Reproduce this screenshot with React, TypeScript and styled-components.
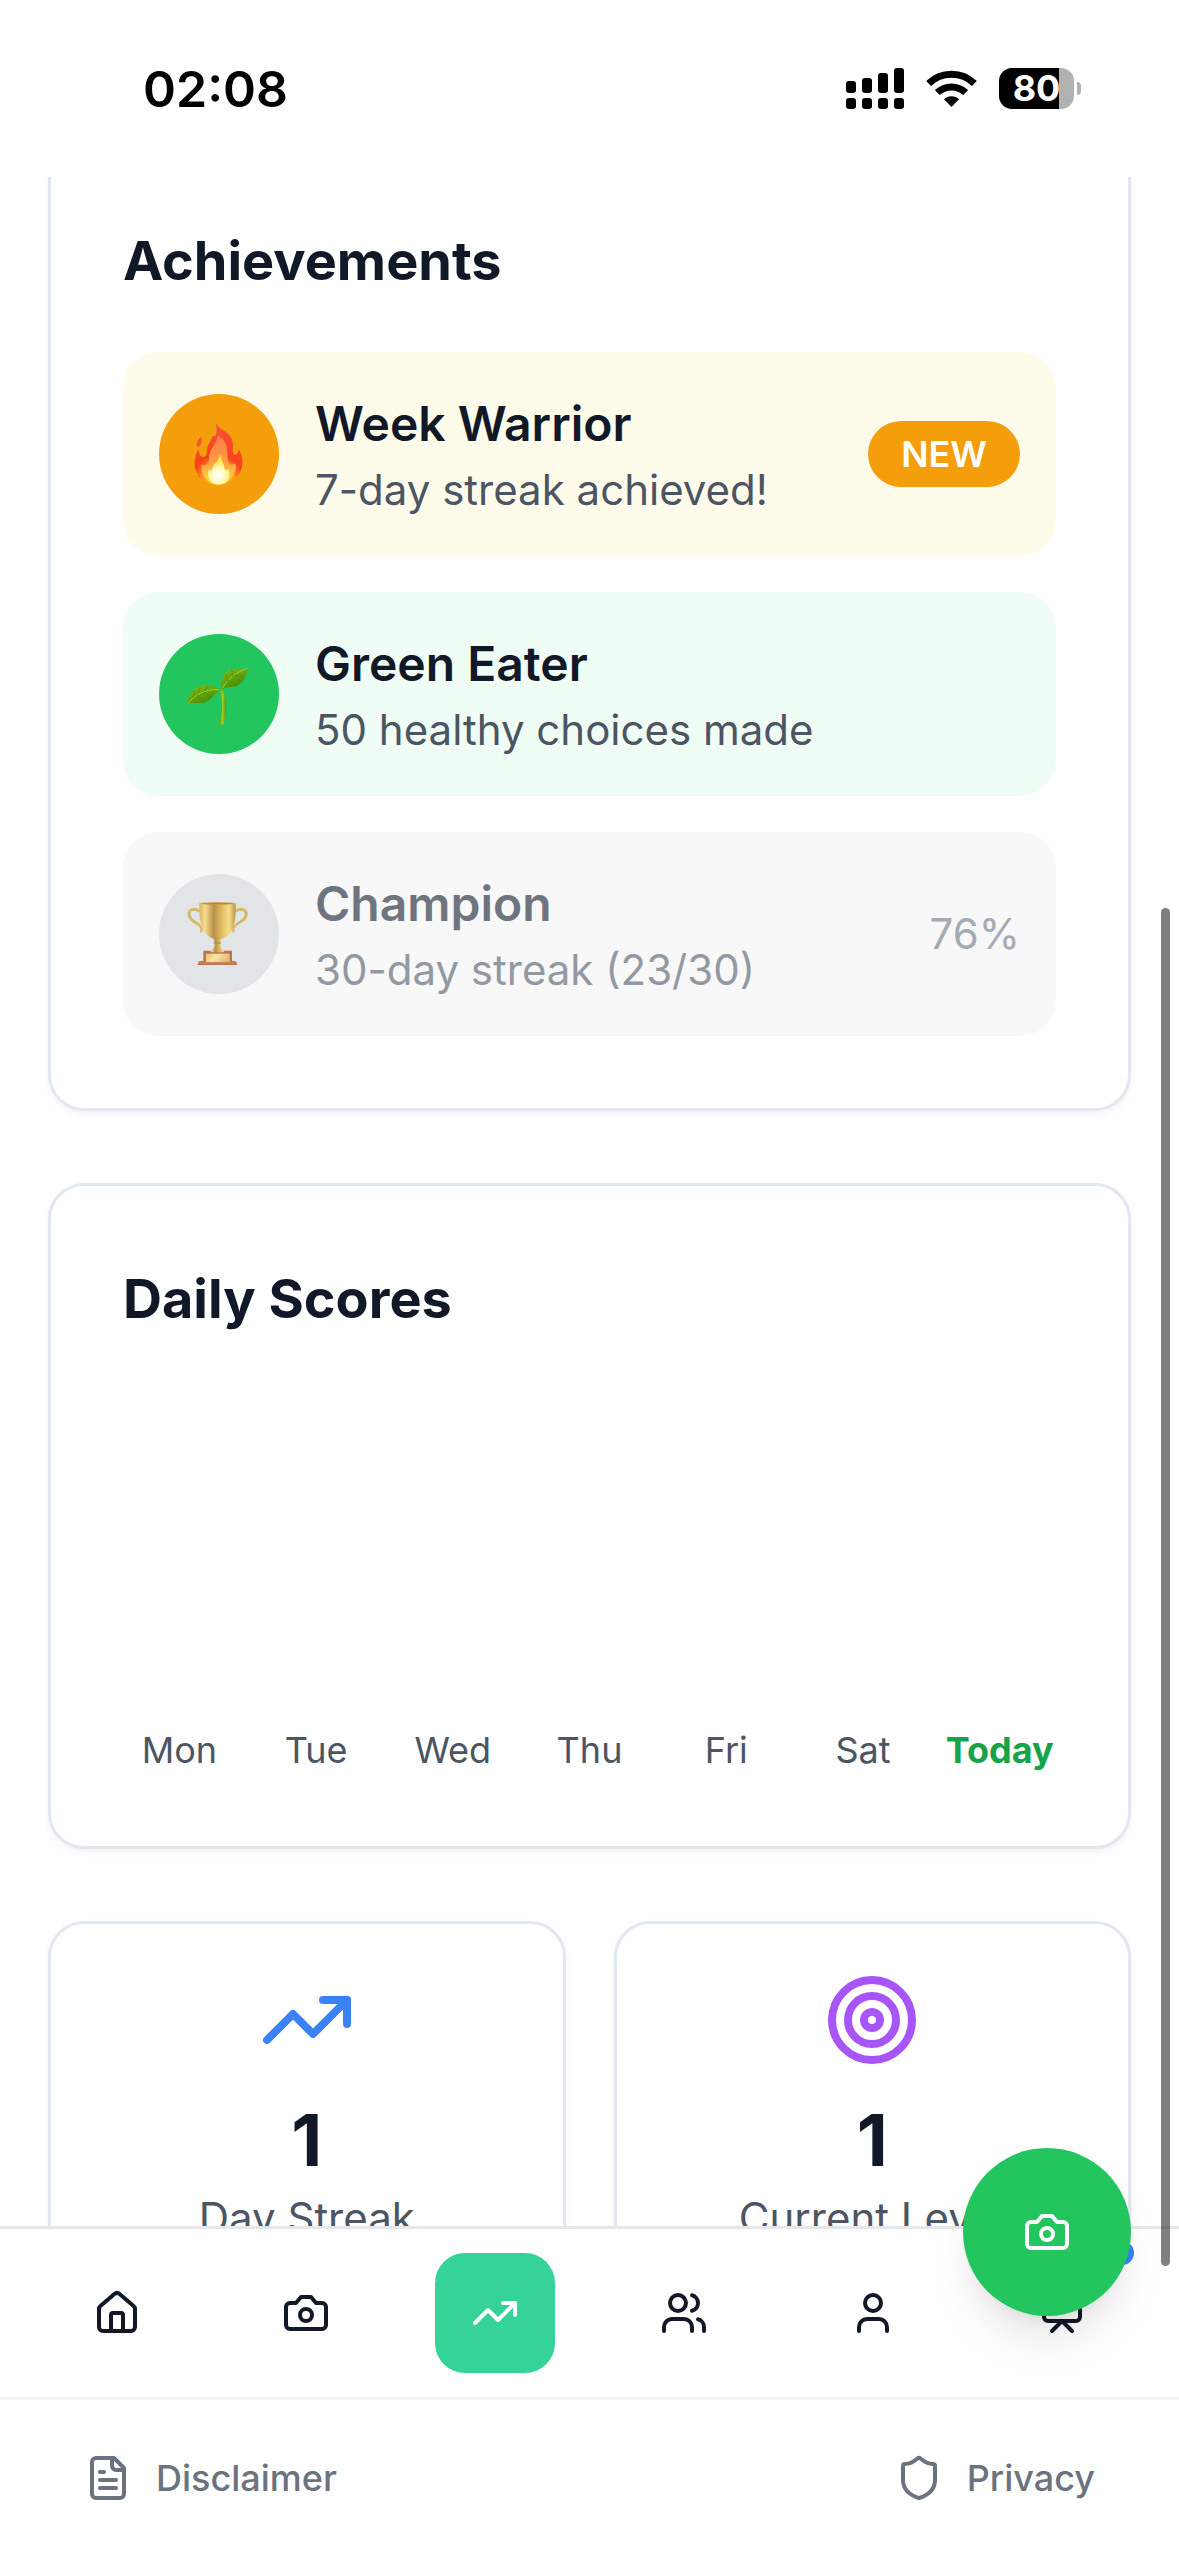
import React from "react";
import styled, { createGlobalStyle } from "styled-components";
import { House, Presentation, Shield, Target, TrendingUp } from "lucide-react";

const GlobalStyle = createGlobalStyle`
  *, *::before, *::after { box-sizing: border-box; }
  body {
    margin: 0;
    background: #ffffff;
    color: #111827;
    font-family: Inter, "Liberation Sans", sans-serif;
  }
  h2, h3, p, ul { margin: 0; padding: 0; }
  ul { list-style: none; }
  button { font: inherit; border: 0; cursor: pointer; }
`;

const Screen = styled.div`
  position: relative;
  display: flex;
  flex-direction: column;
  height: 100vh;
  overflow: hidden;
`;

/* ---------- status bar ---------- */

const StatusBar = styled.header`
  display: flex;
  flex: none;
  align-items: center;
  justify-content: space-between;
  height: 177px;
  padding: 0 98px 0 143px;
`;

const Clock = styled.time`
  color: #000000;
  font-size: 50px;
  font-weight: 600;
  line-height: 60px;
`;

const StatusIcons = styled.div`
  display: flex;
  align-items: center;
  gap: 22px;
`;

const Battery = styled.div`
  display: flex;
  align-items: center;
  gap: 3px;
`;

const BatteryBody = styled.div`
  display: flex;
  align-items: center;
  justify-content: center;
  width: 75px;
  height: 41px;
  border-radius: 13px;
  background: linear-gradient(to right, #000000 80%, #b1b1b1 80%);
  color: #ffffff;
  font-size: 36px;
  font-weight: 700;
  line-height: 41px;
`;

const BatteryTip = styled.div`
  width: 4px;
  height: 13px;
  border-radius: 0 4px 4px 0;
  background: #b1b1b1;
`;

/* ---------- content ---------- */

const Content = styled.main`
  display: flex;
  flex: 1;
  flex-direction: column;
  gap: 72px;
  min-height: 0;
  padding: 0 48px;
  overflow: hidden;
`;

const Card = styled.section<{ $continued?: boolean }>`
  flex: none;
  padding: ${(p) => (p.$continued ? "43px 72px 72px" : "72px")};
  border: 3px solid #e2e8f0;
  border-top-width: ${(p) => (p.$continued ? "0" : "3px")};
  border-radius: ${(p) => (p.$continued ? "0 0 36px 36px" : "36px")};
  background: #ffffff;
  box-shadow: 0 3px 6px rgba(0, 0, 0, 0.05);
`;

const CardTitle = styled.h2`
  margin-bottom: 51px;
  font-size: 54px;
  font-weight: 700;
  line-height: 81px;
`;

const AchievementList = styled.ul`
  display: flex;
  flex-direction: column;
  gap: 36px;
`;

const AchievementRow = styled.li<{ $background: string }>`
  display: flex;
  align-items: center;
  gap: 36px;
  padding: 36px;
  border-radius: 36px;
  background: ${(p) => p.$background};
`;

const Medal = styled.div<{ $color: string }>`
  flex: none;
  width: 120px;
  height: 120px;
  border-radius: 50%;
  background: ${(p) => p.$color};
`;

const AchievementText = styled.div`
  flex: 1;
  min-width: 0;
`;

const AchievementName = styled.h3<{ $muted?: boolean }>`
  color: ${(p) => (p.$muted ? "#6f757f" : "#111827")};
  font-size: 48px;
  font-weight: 600;
  line-height: 72px;
`;

const AchievementNote = styled.p<{ $muted?: boolean }>`
  color: ${(p) => (p.$muted ? "#9399a2" : "#4b5563")};
  font-size: 42px;
  line-height: 60px;
`;

const NewBadge = styled.span`
  padding: 9px 33px;
  border-radius: 33px;
  background: #f59e0b;
  color: #ffffff;
  font-size: 36px;
  font-weight: 600;
  line-height: 48px;
`;

const Progress = styled.span`
  color: #a5abb4;
  font-size: 42px;
  line-height: 60px;
`;

const Chart = styled.div`
  display: flex;
  align-items: flex-end;
  gap: 24px;
  height: 384px;
`;

const Day = styled.div<{ $today?: boolean }>`
  display: flex;
  flex: 1 1 0;
  justify-content: center;
  min-width: 0;
  color: ${(p) => (p.$today ? "#16a34a" : "#4b5563")};
  font-size: 36px;
  font-weight: ${(p) => (p.$today ? 700 : 400)};
  line-height: 48px;
`;

const StatGrid = styled.div`
  display: grid;
  flex: none;
  grid-template-columns: 1fr 1fr;
  gap: 48px;
`;

const StatCard = styled(Card)`
  display: flex;
  flex-direction: column;
  align-items: center;
  padding: 48px;
`;

const StatValue = styled.p`
  margin-top: 24px;
  font-size: 72px;
  font-weight: 700;
  line-height: 96px;
`;

const StatLabel = styled.p`
  color: #4b5563;
  font-size: 42px;
  line-height: 60px;
`;

/* ---------- bottom bars ---------- */

const Nav = styled.nav`
  display: flex;
  flex: none;
  justify-content: space-between;
  padding: 24px 57px;
  border-top: 3px solid #e5e7eb;
  background: #ffffff;
`;

const NavButton = styled.button<{ $active?: boolean }>`
  position: relative;
  display: flex;
  align-items: center;
  justify-content: center;
  width: 120px;
  height: 120px;
  padding: 0;
  border-radius: 30px;
  background: ${(p) => (p.$active ? "#36d399" : "transparent")};
  color: ${(p) => (p.$active ? "#ffffff" : "#111827")};
`;

const NotificationDot = styled.span`
  position: absolute;
  top: -12px;
  right: -12px;
  width: 24px;
  height: 24px;
  border-radius: 50%;
  background: #3b82f6;
`;

const Footer = styled.footer`
  display: flex;
  flex: none;
  align-items: center;
  justify-content: space-between;
  height: 159px;
  padding: 0 84px;
  border-top: 3px solid #f3f4f6;
  background: #ffffff;
`;

const FooterLink = styled.a`
  display: flex;
  align-items: center;
  gap: 24px;
  color: #6b7280;
  font-size: 36px;
  font-weight: 500;
  line-height: 48px;
  text-decoration: none;
`;

const CameraButton = styled.button`
  position: absolute;
  right: 48px;
  bottom: 240px;
  display: flex;
  align-items: center;
  justify-content: center;
  width: 168px;
  height: 168px;
  padding: 0;
  border-radius: 50%;
  background: #22c55e;
  color: #ffffff;
  box-shadow: 0 30px 45px -9px rgba(0, 0, 0, 0.1), 0 12px 18px -12px rgba(0, 0, 0, 0.1);
`;

const ScrollThumb = styled.div`
  position: absolute;
  top: 908px;
  right: 9px;
  bottom: 290px;
  width: 9px;
  border-radius: 5px;
  background: rgba(0, 0, 0, 0.5);
`;

/* ---------- drawings ---------- */

const LineIcon = ({ children }: { children: React.ReactNode }) => (
  <svg
    width="48"
    height="48"
    viewBox="0 0 24 24"
    fill="none"
    stroke="currentColor"
    strokeWidth="2"
    strokeLinecap="round"
    strokeLinejoin="round"
    aria-hidden="true"
  >
    {children}
  </svg>
);

const CameraIcon = () => (
  <LineIcon>
    <path d="M14.5 4h-5L7 7H4a2 2 0 0 0-2 2v9a2 2 0 0 0 2 2h16a2 2 0 0 0 2-2V9a2 2 0 0 0-2-2h-3l-2.5-3z" />
    <circle cx="12" cy="13" r="3" />
  </LineIcon>
);

const UsersIcon = () => (
  <LineIcon>
    <path d="M16 21v-2a4 4 0 0 0-4-4H6a4 4 0 0 0-4 4v2" />
    <circle cx="9" cy="7" r="4" />
    <path d="M22 21v-2a4 4 0 0 0-3-3.87" />
    <path d="M16 3.13a4 4 0 0 1 0 7.75" />
  </LineIcon>
);

const UserIcon = () => (
  <LineIcon>
    <path d="M19 21v-2a4 4 0 0 0-4-4H9a4 4 0 0 0-4 4v2" />
    <circle cx="12" cy="7" r="4" />
  </LineIcon>
);

const FileIcon = () => (
  <LineIcon>
    <path d="M15 2H6a2 2 0 0 0-2 2v16a2 2 0 0 0 2 2h12a2 2 0 0 0 2-2V7Z" />
    <path d="M14 2v4a2 2 0 0 0 2 2h4" />
    <path d="M10 9H8" />
    <path d="M16 13H8" />
    <path d="M16 17H8" />
  </LineIcon>
);

const SignalIcon = () => (
  <svg width="58" height="41" viewBox="0 0 58 41" aria-hidden="true">
    <rect x="0" y="13" width="10" height="12" rx="3" />
    <rect x="16" y="10" width="10" height="15" rx="3" />
    <rect x="32" y="5" width="10" height="20" rx="3" />
    <rect x="48" y="0" width="10" height="25" rx="3" />
    {[0, 16, 32, 48].map((x) => (
      <rect key={x} x={x} y="30" width="10" height="11" rx="3" />
    ))}
  </svg>
);

const WifiIcon = () => (
  <svg width="51" height="37" viewBox="0 0 51 37" fill="none" stroke="#000000" aria-hidden="true">
    <path d="M2.6 13.6a33 33 0 0 1 45.8 0" strokeWidth="7" />
    <path d="M11.3 22.6a20.5 20.5 0 0 1 28.4 0" strokeWidth="7" />
    <path d="M25.5 37 18 29.3a10.5 10.5 0 0 1 15 0Z" fill="#000000" stroke="none" />
  </svg>
);

const Flame = () => (
  <svg width="120" height="120" viewBox="0 0 360 360" aria-hidden="true">
    <defs>
      <radialGradient id="flameOuter" gradientUnits="userSpaceOnUse" cx="178" cy="255" r="165">
        <stop offset="0" stopColor="#ffd83a" />
        <stop offset="0.28" stopColor="#ff9a22" />
        <stop offset="0.44" stopColor="#f8421a" />
        <stop offset="1" stopColor="#f4553a" />
      </radialGradient>
      <linearGradient id="flameMid" x1="0" y1="0" x2="0" y2="1">
        <stop offset="0" stopColor="#ff7a4a" />
        <stop offset="0.5" stopColor="#ff9a42" />
        <stop offset="1" stopColor="#ffdf3e" />
      </linearGradient>
      <radialGradient id="flameCore" gradientUnits="userSpaceOnUse" cx="178" cy="244" r="46">
        <stop offset="0" stopColor="#ffffff" />
        <stop offset="0.45" stopColor="#fffbc0" />
        <stop offset="1" stopColor="#ffe33f" />
      </radialGradient>
    </defs>
    <path
      d="M170 86c8 22 51 26 52 66 0 15-3 30 6 30 7 0 10-5 10-17 14 17 16 44 7 65-4 9-8 14-15 18l4 1c-9 7-18 8-27 14-10 7-20 9-32 9-17 0-29-6-42-15-7-5-12-6-18-12l5-1c-15-16-20-50-1-78 1 13 5 23 13 23 8 1 11-7 12-18 1-24 13-27 16-44l9-2c5-8 5-22 1-39Z"
      fill="url(#flameOuter)"
    />
    <path
      d="M177 124c-6 28-28 44-27 70 0 18-15 24-22 18-3 23 8 39 25 52 14 10 39 9 52-1 18-14 29-33 24-56-6 6-15 7-20-1-9-18 8-56-32-82Z"
      fill="url(#flameMid)"
    />
    <path
      d="M183 179c-2 24-18 25-22 42-3 10-9 9-11 4-7 18 1 37 13 43 9 5 23 5 33 0 14-8 20-25 12-44-4 6-11 4-12-3-2-15-6-17-13-42Z"
      fill="url(#flameCore)"
    />
    <path d="M127 129c-8 5-14 15-14 26l5 5c7-8 13-17 9-31Z" fill="#f4542b" />
  </svg>
);

const Seedling = () => (
  <svg width="120" height="120" viewBox="0 0 360 360" aria-hidden="true">
    <defs>
      <linearGradient id="leaf" x1="0" y1="0" x2="0.6" y2="1">
        <stop offset="0" stopColor="#87bd18" />
        <stop offset="0.5" stopColor="#65a60d" />
        <stop offset="1" stopColor="#3f8608" />
      </linearGradient>
      <linearGradient id="stem" x1="0" y1="0" x2="1" y2="0">
        <stop offset="0" stopColor="#5b9a0a" />
        <stop offset="0.5" stopColor="#a4cf1c" />
        <stop offset="1" stopColor="#548f0c" />
      </linearGradient>
    </defs>
    <path d="M180 166c14 30 12 67 1 104 4 4 9 4 13 1 10-37 12-76-6-106Z" fill="url(#stem)" />
    <path d="M84 214c2-31 20-58 51-60 18-1 39 4 50 14-17 6-25 29-45 36-23 8-45-4-56 10Z" fill="url(#leaf)" />
    <path d="M187 166c-4-30 9-54 33-60 18-4 33 0 48-3-7 20-12 42-33 52-17 7-34 1-48 11Z" fill="url(#leaf)" />
    <g fill="none" strokeLinecap="round">
      <path d="M87 210c16-26 48-45 92-43M190 162c17-27 40-48 74-58" stroke="#9fcd3c" strokeWidth="3" />
      <path
        d="M104 188l2-16M119 177l3-16M139 170l5-13M113 183l20 15M133 173l22 14M205 142l-2-19M220 127l-1-18M208 139l22 12M224 123l26 6"
        stroke="#468b0b"
        strokeWidth="2"
      />
    </g>
  </svg>
);

const Trophy = () => (
  <svg width="120" height="120" viewBox="0 0 360 360" aria-hidden="true">
    <defs>
      <linearGradient id="cup" x1="0" y1="0" x2="1" y2="0">
        <stop offset="0" stopColor="#dcb559" />
        <stop offset="0.16" stopColor="#f5dc8c" />
        <stop offset="0.4" stopColor="#b7924b" />
        <stop offset="0.62" stopColor="#e3bd61" />
        <stop offset="0.82" stopColor="#f7dd88" />
        <stop offset="1" stopColor="#bb944a" />
      </linearGradient>
      <linearGradient id="plate" x1="0" y1="0" x2="1" y2="0.3">
        <stop offset="0" stopColor="#e9bf72" />
        <stop offset="0.5" stopColor="#f8e5a6" />
        <stop offset="1" stopColor="#e6bb70" />
      </linearGradient>
    </defs>
    <g fill="none" stroke="#dfba63" strokeWidth="7" strokeLinecap="round">
      <path d="M119 110c-10-10-30-5-30 10 0 17 16 23 29 32 11 7 12 13 8 20" />
      <path d="M231 110c10-10 32-5 32 10 0 17-17 23-31 32-11 7-12 13-8 20" />
    </g>
    <g fill="none" stroke="#b99350" strokeWidth="2">
      <path d="M117 113c-10-8-25-4-24 8 0 13 14 20 26 28" />
      <path d="M233 113c10-8 27-4 26 8 0 13-15 20-28 28" />
    </g>
    <path d="M121 88h109c1 44-2 88-34 104-12 5-27 5-39 0-33-15-37-60-36-104Z" fill="url(#cup)" />
    <ellipse cx="175" cy="88" rx="55" ry="4" fill="#d3aa56" />
    <ellipse cx="175" cy="89" rx="47" ry="2" fill="#a98343" />
    <path d="M163 194h24c-1 6-5 9-4 15 1 9 4 12 8 18 9 1 14 5 14 12h-59c0-7 5-11 14-12 4-6 7-9 7-18 0-6-3-9-4-15Z" fill="url(#cup)" />
    <path d="M163 207h23" stroke="#a98449" strokeWidth="3" />
    <path d="M133 230h20l5 5h34l5-5h22v31h8c4 0 7 5 7 12H116c0-7 4-12 8-12h9Z" fill="#bb744f" />
    <rect x="141" y="239" width="71" height="25" fill="url(#plate)" />
    <path d="M117 267h117" stroke="#d18e68" strokeWidth="3" />
  </svg>
);

const days = ["Mon", "Tue", "Wed", "Thu", "Fri", "Sat", "Today"];

const navItems = [
  { label: "Home", icon: <House size={48} /> },
  { label: "Camera", icon: <CameraIcon /> },
  { label: "Trends", icon: <TrendingUp size={48} />, active: true },
  { label: "Community", icon: <UsersIcon /> },
  { label: "Profile", icon: <UserIcon /> },
  { label: "Presentation", icon: <Presentation size={48} />, dot: true },
];

export default function App() {
  return (
    <>
      <GlobalStyle />
      <Screen>
        <StatusBar>
          <Clock>02:08</Clock>
          <StatusIcons>
            <SignalIcon />
            <WifiIcon />
            <Battery>
              <BatteryBody>80</BatteryBody>
              <BatteryTip />
            </Battery>
          </StatusIcons>
        </StatusBar>

        <Content>
          <Card $continued>
            <CardTitle>Achievements</CardTitle>
            <AchievementList>
              <AchievementRow $background="#fffbeb">
                <Medal $color="#f59e0b">
                  <Flame />
                </Medal>
                <AchievementText>
                  <AchievementName>Week Warrior</AchievementName>
                  <AchievementNote>7-day streak achieved!</AchievementNote>
                </AchievementText>
                <NewBadge>NEW</NewBadge>
              </AchievementRow>
              <AchievementRow $background="#f0fdf4">
                <Medal $color="#22c55e">
                  <Seedling />
                </Medal>
                <AchievementText>
                  <AchievementName>Green Eater</AchievementName>
                  <AchievementNote>50 healthy choices made</AchievementNote>
                </AchievementText>
              </AchievementRow>
              <AchievementRow $background="#f8f8f8">
                <Medal $color="#e1e5e8">
                  <Trophy />
                </Medal>
                <AchievementText>
                  <AchievementName $muted>Champion</AchievementName>
                  <AchievementNote $muted>30-day streak (23/30)</AchievementNote>
                </AchievementText>
                <Progress>76%</Progress>
              </AchievementRow>
            </AchievementList>
          </Card>

          <Card>
            <CardTitle>Daily Scores</CardTitle>
            <Chart>
              {days.map((day) => (
                <Day key={day} $today={day === "Today"}>
                  {day}
                </Day>
              ))}
            </Chart>
          </Card>

          <StatGrid>
            <StatCard>
              <TrendingUp size={96} color="#3b82f6" />
              <StatValue>1</StatValue>
              <StatLabel>Day Streak</StatLabel>
            </StatCard>
            <StatCard>
              <Target size={96} color="#a855f7" />
              <StatValue>1</StatValue>
              <StatLabel>Current Level</StatLabel>
            </StatCard>
          </StatGrid>
        </Content>

        <Nav>
          {navItems.map((item) => (
            <NavButton key={item.label} type="button" aria-label={item.label} $active={item.active}>
              {item.icon}
              {item.dot && <NotificationDot />}
            </NavButton>
          ))}
        </Nav>

        <Footer>
          <FooterLink href="#disclaimer">
            <FileIcon />
            Disclaimer
          </FooterLink>
          <FooterLink href="#privacy">
            <Shield size={48} />
            Privacy
          </FooterLink>
        </Footer>

        <CameraButton type="button" aria-label="Take a photo">
          <CameraIcon />
        </CameraButton>
        <ScrollThumb />
      </Screen>
    </>
  );
}
